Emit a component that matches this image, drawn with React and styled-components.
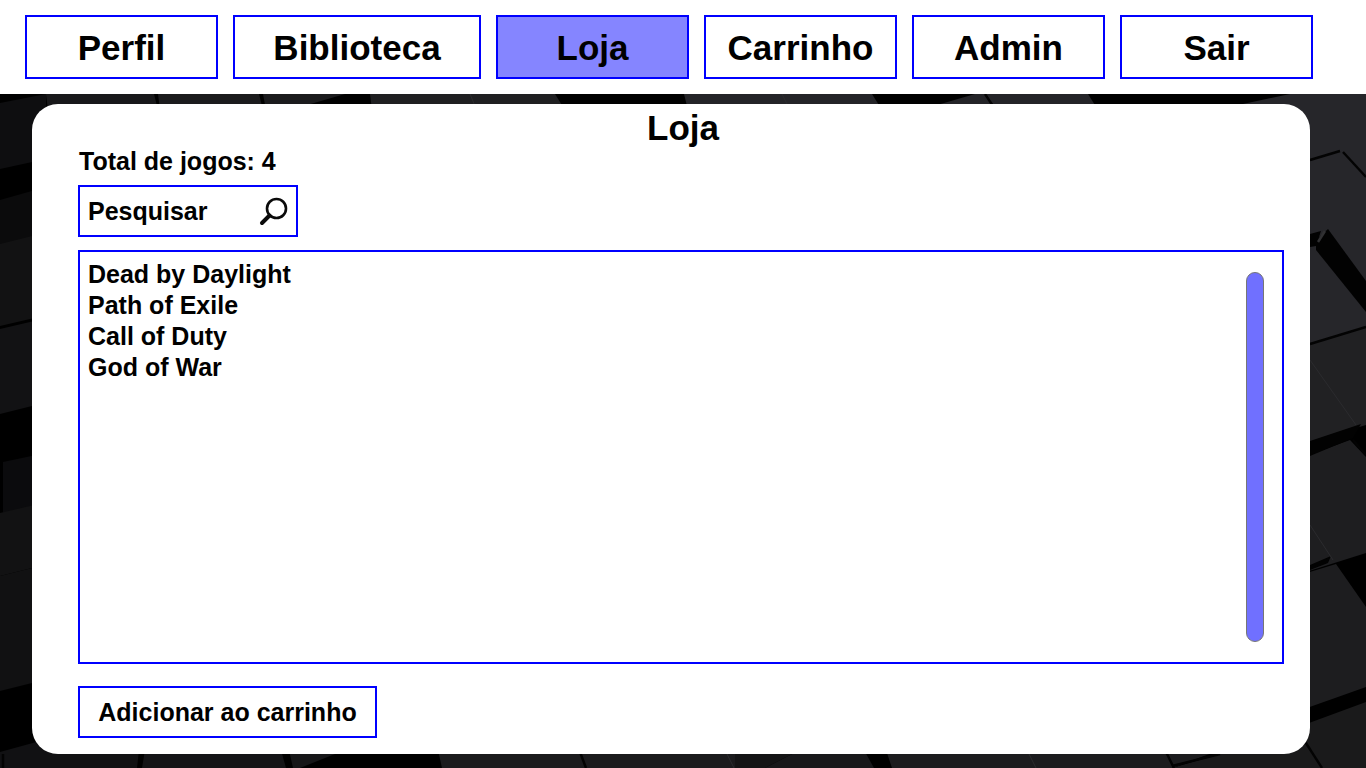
import React from "react";
import styled, { createGlobalStyle } from "styled-components";

const GlobalStyle = createGlobalStyle`
  *, *::before, *::after { box-sizing: border-box; }
  body {
    margin: 0;
    background: #000;
    color: #000;
    font-family: "Liberation Sans", Arial, sans-serif;
    font-weight: bold;
  }
`;

const Page = styled.div`
  min-height: 100vh;
  display: flex;
  flex-direction: column;
`;

const NavBar = styled.nav`
  display: flex;
  gap: 15px;
  padding: 15px 25px;
  background: #fff;
`;

const NavLink = styled.a`
  flex: 0 1 ${(p) => (p.$wide ? "248px" : "193px")};
  height: 64px;
  display: flex;
  align-items: center;
  justify-content: center;
  padding-top: 2px;
  border: 2px solid #0000ff;
  background: ${(p) => (p.$active ? "#8585ff" : "#fff")};
  color: #000;
  font-size: 35px;
  line-height: 40px;
  text-decoration: none;
`;

const Stage = styled.main`
  flex: 1;
  display: grid;
  overflow: hidden;
`;

const Backdrop = styled.svg`
  grid-area: 1 / 1;
  width: 100%;
  height: 100%;
  min-height: 0;
  contain: size;
`;

const Panel = styled.section`
  grid-area: 1 / 1;
  z-index: 1;
  display: flex;
  flex-direction: column;
  margin: 10px 56px 14px 32px;
  padding: 4px 26px 16px 46px;
  border-radius: 26px;
  background: #fff;
`;

const Title = styled.h1`
  margin: 0;
  padding-left: 4px;
  font-size: 35px;
  line-height: 40px;
  text-align: center;
`;

const Total = styled.p`
  margin: 0 0 10px;
  padding-left: 1px;
  font-size: 25px;
  line-height: 27px;
`;

const SearchForm = styled.form`
  display: flex;
  align-items: center;
  width: 220px;
  height: 52px;
  margin-bottom: 13px;
  padding: 0 8px;
  border: 2px solid #0000ff;
`;

const SearchInput = styled.input`
  flex: 1;
  min-width: 0;
  padding: 0;
  border: 0;
  outline: 0;
  background: none;
  color: #000;
  font: bold 25px/29px "Liberation Sans", Arial, sans-serif;
  &::placeholder { color: #000; opacity: 1; }
`;

const SearchButton = styled.button`
  display: flex;
  padding: 0;
  border: 0;
  background: none;
  cursor: pointer;
`;

const GameBox = styled.div`
  flex: 1;
  display: flex;
  justify-content: space-between;
  min-height: 200px;
  margin-bottom: 22px;
  border: 2px solid #0000ff;
`;

const GameList = styled.ul`
  margin: 0;
  padding: 7px 8px;
  list-style: none;
`;

const Game = styled.li`
  font-size: 25px;
  line-height: 31px;
`;

const ScrollThumb = styled.div`
  width: 18px;
  margin: 20px 18px;
  border: 1px solid #767676;
  border-radius: 9px;
  background: #7070ff;
`;

const AddButton = styled.button`
  align-self: flex-start;
  min-width: 299px;
  height: 52px;
  padding: 0 18px;
  border: 2px solid #0000ff;
  background: #fff;
  color: #000;
  font: bold 25px/29px "Liberation Sans", Arial, sans-serif;
  cursor: pointer;
`;

const links = [
  { label: "Perfil" },
  { label: "Biblioteca", wide: true },
  { label: "Loja", active: true },
  { label: "Carrinho" },
  { label: "Admin" },
  { label: "Sair" },
];

const games = ["Dead by Daylight", "Path of Exile", "Call of Duty", "God of War"];

/* Faces of the dark cubes: [fill, points] */
const faces = [
  ["#0e0e10", "0,103 46,94 46,159 0,169"],
  ["#0b0b0c", "0,200 60,183 60,230 0,245"],
  ["#121213", "0,244 60,229 60,312 0,326"],
  ["#121214", "0,329 60,315 60,399 0,414"],
  ["#0b0b0d", "3,462 60,450 60,500 3,513"],
  ["#121213", "0,513 60,499 60,561 0,576"],
  ["#111112", "0,576 60,561 60,676 0,691"],
  ["#111113", "0,752 40,741 140,741 137,768 0,768"],
  ["#18181a", "46,94 154,94 158,110 48,110"],
  ["#1b1b1d", "158,94 259,94 263,110 160,110"],
  ["#1b1b1d", "263,94 345,94 290,110 266,110"],
  ["#1f1f21", "370,94 555,94 565,110 372,110"],
  ["#242428", "684,94 872,94 882,110 688,110"],
  ["#242428", "975,94 1088,94 1098,110 920,110"],
  ["#26262a", "1290,94 1366,94 1366,327 1290,350 1290,110 1215,110"],
  ["#212123", "1290,349 1366,327 1366,425 1290,448"],
  ["#1e1e20", "1290,462 1350,440 1366,457 1366,553 1290,577"],
  ["#1d1d1f", "1290,578 1336,564 1366,607 1366,687 1290,714"],
  ["#1a1a1b", "1290,730 1366,702 1366,768 1172,768 1220,754"],
  ["#141416", "145,750 281,750 286,768 142,768"],
  ["#161618", "289,750 345,750 300,768 293,768"],
  ["#1b1b1d", "438,750 735,750 735,768 442,768"],
  ["#141415", "735,750 800,750 765,768 735,768"],
  ["#18181a", "800,750 864,750 874,768 765,768"],
  ["#1c1c1e", "886,750 1220,750 1172,768 892,768"],
];

const shadows = [
  "1310,234 1321,231 1316,246 1310,247",
  "1316,240 1328,229 1366,281 1366,312 1316,250",
  "1310,441 1361,424 1353,438 1310,456",
  "1310,565 1331,556 1328,563 1310,570",
];

const seams = [
  "M1310 160L1340 151",
  "M1343 152L1366 177",
  "M1310 344L1366 327",
  "M1353 440L1366 455",
  "M1304 740L1322 768",
  "M985 94L993 106",
  "M580 752L586 768",
  "M1166 752L1174 768",
  "M1172 766L1220 754",
  "M3 754V768",
];

const glints = [
  "M470 94L475 106",
  "M782 94L788 106",
  "M726 752L734 768",
  "M1028 752L1036 768",
  "M1310 360L1356 425",
  "M1310 525L1333 560",
];

function CubesBackdrop() {
  return (
    <Backdrop viewBox="0 94 1366 674" preserveAspectRatio="xMidYMid slice" aria-hidden="true">
      <rect x="0" y="94" width="1366" height="674" fill="#000" />
      {faces.map(([fill, points]) => (
        <polygon key={points} points={points} fill={fill} />
      ))}
      {shadows.map((points) => (
        <polygon key={points} points={points} fill="#020202" />
      ))}
      {glints.map((d) => (
        <path key={d} d={d} stroke="#2b2b2e" strokeWidth="1" />
      ))}
      {seams.map((d) => (
        <path key={d} d={d} stroke="#030303" strokeWidth="2.4" />
      ))}
      <path d="M1318 242L1325 231" stroke="#303032" strokeWidth="2.5" />
    </Backdrop>
  );
}

export default function App() {
  return (
    <Page>
      <GlobalStyle />
      <NavBar>
        {links.map(({ label, wide, active }) => (
          <NavLink key={label} href="#" $wide={wide} $active={active} aria-current={active ? "page" : undefined}>
            {label}
          </NavLink>
        ))}
      </NavBar>
      <Stage>
        <CubesBackdrop />
        <Panel>
          <Title>Loja</Title>
          <Total>Total de jogos: 4</Total>
          <SearchForm role="search" onSubmit={(e) => e.preventDefault()}>
            <SearchInput type="text" placeholder="Pesquisar" aria-label="Pesquisar" />
            <SearchButton type="submit" aria-label="Pesquisar">
              <svg width="30" height="30" viewBox="0 0 30 30" fill="none" stroke="#0a0a0a">
                <circle cx="18.5" cy="12.5" r="9.5" strokeWidth="2.6" />
                <path d="M11.5 19.5L4 27" strokeWidth="4" strokeLinecap="round" />
              </svg>
            </SearchButton>
          </SearchForm>
          <GameBox>
            <GameList>
              {games.map((name) => (
                <Game key={name}>{name}</Game>
              ))}
            </GameList>
            <ScrollThumb />
          </GameBox>
          <AddButton type="button">Adicionar ao carrinho</AddButton>
        </Panel>
      </Stage>
    </Page>
  );
}
